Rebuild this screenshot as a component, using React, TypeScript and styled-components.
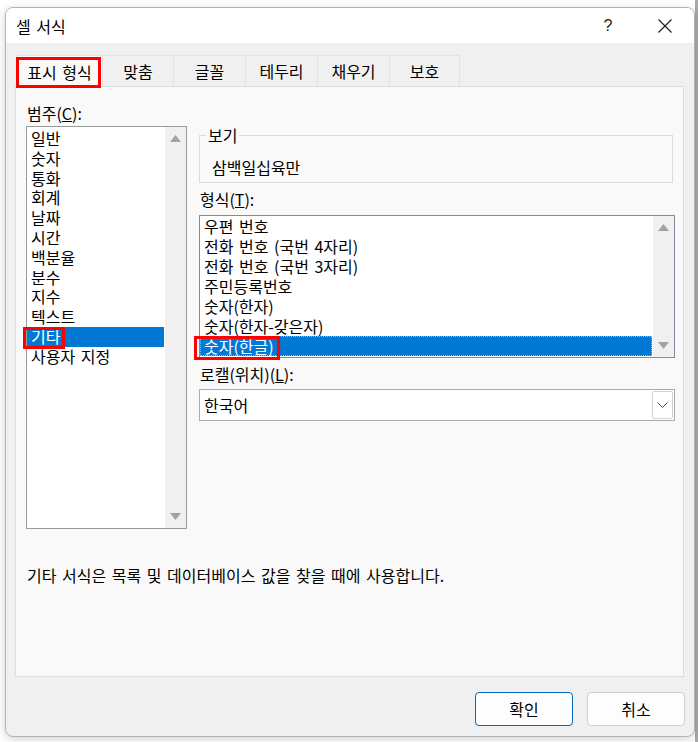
import styled, { createGlobalStyle } from 'styled-components';

const GlobalStyle = createGlobalStyle`
  html, body {
    margin: 0;
    padding: 0;
  }
  body {
    font-family: "Noto Sans CJK KR", "Noto Sans", sans-serif;
    font-size: 16px;
    word-spacing: 2px;
    color: #000;
    background: #fff;
  }
`;

const Page = styled.div`
  width: 698px;
  height: 742px;
  box-sizing: border-box;
  padding: 7px 3px 5px 5px;
  background: linear-gradient(to right, #fff 695px, #a9a9a9 695px);
`;

const Dialog = styled.div`
  width: 690px;
  height: 730px;
  box-sizing: border-box;
  display: flex;
  flex-direction: column;
  border: 1px solid #b4b4b4;
  border-radius: 8px;
  overflow: hidden;
  background: #f0f0f0;
  box-shadow: 0 2px 8px rgba(0, 0, 0, 0.18);
`;

const TitleBar = styled.div`
  height: 35px;
  display: flex;
  align-items: center;
  background: #fff;
`;

const Title = styled.div`
  flex: 1;
  padding-left: 10px;
  line-height: 20px;
`;

const TitleButton = styled.div<{ $width: number }>`
  width: ${(p) => p.$width}px;
  height: 35px;
  display: flex;
  align-items: center;
  justify-content: center;
  font-family: "Liberation Sans", sans-serif;
  font-size: 16px;
  color: #1a1a1a;
`;

const Body = styled.div`
  flex: 1;
  display: flex;
  flex-direction: column;
  padding: 12px 10px 0 9px;
`;

const TabBar = styled.div`
  display: flex;
  height: 31px;
  padding-left: 1px;
`;

const Tab = styled.div<{ $width: number; $active?: boolean; $marked?: boolean }>`
  position: relative;
  width: ${(p) => p.$width}px;
  box-sizing: border-box;
  display: flex;
  align-items: center;
  justify-content: center;
  line-height: 20px;
  background: ${(p) => (p.$active ? '#f9f9f9' : '#f0f0f0')};
  border: 1px solid #e2e2e2;
  border-bottom: none;
  border-left-width: ${(p) => (p.$active ? 1 : 0)}px;
  margin-bottom: ${(p) => (p.$active ? -1 : 0)}px;
  z-index: ${(p) => (p.$active ? 1 : 0)};

  &::after {
    content: '';
    display: ${(p) => (p.$marked ? 'block' : 'none')};
    position: absolute;
    top: 1px;
    left: -1px;
    right: 1px;
    bottom: -1px;
    border: 3px solid #ff0000;
    pointer-events: none;
  }
`;

const Panel = styled.div`
  height: 591px;
  box-sizing: border-box;
  background: #f9f9f9;
  border: 1px solid #dedede;
  padding: 16px 0 0 10px;
`;

const Columns = styled.div`
  display: flex;
  gap: 12px;
`;

const Column = styled.div<{ $top?: number }>`
  display: flex;
  flex-direction: column;
  padding-top: ${(p) => p.$top ?? 0}px;
`;

const Label = styled.div<{ $gap?: number }>`
  line-height: 20px;
  margin: ${(p) => p.$gap ?? 0}px 0 0 1px;
`;

const ListBox = styled.div<{ $width: number; $height: number; $pad: number; $border: string }>`
  width: ${(p) => p.$width}px;
  height: ${(p) => p.$height}px;
  box-sizing: border-box;
  display: flex;
  margin-top: ${(p) => p.$pad}px;
  border: 1px solid ${(p) => p.$border};
  background: #fff;
`;

const ListItems = styled.div<{ $top: number }>`
  flex: 1;
  display: flex;
  flex-direction: column;
  padding-top: ${(p) => p.$top}px;
`;

const ListItem = styled.div<{ $selected?: boolean; $focus?: boolean; $height: number; $indent: number }>`
  height: ${(p) => p.$height}px;
  line-height: ${(p) => p.$height - 2}px;
  box-sizing: border-box;
  padding-left: ${(p) => p.$indent}px;
  white-space: nowrap;
  background: ${(p) => (p.$selected ? '#0078d4' : 'transparent')};
  color: ${(p) => (p.$selected ? '#fff' : '#000')};
  border: 1px dotted ${(p) => (p.$focus ? '#f5a04a' : 'transparent')};
  margin-right: 1px;
`;

const Mark = styled.span<{ $t: number; $r: number; $b: number; $l: number }>`
  position: relative;
  display: inline-block;

  &::after {
    content: '';
    position: absolute;
    top: ${(p) => p.$t}px;
    right: ${(p) => p.$r}px;
    bottom: ${(p) => p.$b}px;
    left: ${(p) => p.$l}px;
    border: 3px solid #ff0000;
    pointer-events: none;
  }
`;

const ScrollBar = styled.div<{ $up: number; $down: number }>`
  width: 21px;
  display: flex;
  flex-direction: column;
  justify-content: space-between;
  align-items: center;
  padding: ${(p) => p.$up}px 0 ${(p) => p.$down}px;
  background: #f0f0f0;
`;

const Preview = styled.fieldset`
  width: 474px;
  margin: 0;
  padding: 0 12px 5px 12px;
  box-sizing: border-box;
  border: 1px solid #dcdcdc;
`;

const Legend = styled.legend`
  padding: 0 2px;
  margin-left: -6px;
  line-height: 20px;
`;

const PreviewText = styled.div`
  margin-top: 12px;
  line-height: 20px;
`;

const Select = styled.div`
  width: 476px;
  height: 32px;
  margin-top: 5px;
  box-sizing: border-box;
  display: flex;
  border: 1px solid #aaaaaa;
  background: #fff;
`;

const SelectValue = styled.div`
  flex: 1;
  padding-left: 4px;
  line-height: 30px;
`;

const SelectButton = styled.div`
  width: 21px;
  margin: 1px;
  box-sizing: border-box;
  display: flex;
  align-items: center;
  justify-content: center;
  border: 1px solid #d2d2d2;
  border-radius: 2px;
`;

const Description = styled.div`
  margin: 36px 0 0 1px;
  line-height: 20px;
`;

const Footer = styled.div`
  display: flex;
  justify-content: flex-end;
  gap: 14px;
  margin: 15px -1px 0 0;
`;

const Button = styled.div<{ $primary?: boolean }>`
  width: 98px;
  height: 34px;
  box-sizing: border-box;
  display: flex;
  align-items: center;
  justify-content: center;
  border: 1px solid ${(p) => (p.$primary ? '#0067c0' : '#d0d0d0')};
  border-radius: 4px;
  background: #fdfdfd;
`;

const ArrowUp = () => (
  <svg width="11" height="7" viewBox="0 0 11 7">
    <polygon points="0,7 5.5,0 11,7" fill="#a3a3a3" />
  </svg>
);

const ArrowDown = () => (
  <svg width="11" height="7" viewBox="0 0 11 7">
    <polygon points="0,0 5.5,7 11,0" fill="#a3a3a3" />
  </svg>
);

const tabs = [
  { name: '표시 형식', width: 87 },
  { name: '맞춤', width: 71 },
  { name: '글꼴', width: 72 },
  { name: '테두리', width: 72 },
  { name: '채우기', width: 72 },
  { name: '보호', width: 70 },
];

const categories = ['일반', '숫자', '통화', '회계', '날짜', '시간', '백분율', '분수', '지수', '텍스트', '기타', '사용자 지정'];

const formats = [
  '우편 번호',
  '전화 번호 (국번 4자리)',
  '전화 번호 (국번 3자리)',
  '주민등록번호',
  '숫자(한자)',
  '숫자(한자-갖은자)',
  '숫자(한글)',
];

export default function App() {
  return (
    <>
      <GlobalStyle />
      <Page>
        <Dialog>
          <TitleBar>
            <Title>셀 서식</Title>
            <TitleButton $width={56}>?</TitleButton>
            <TitleButton $width={58}>
              <svg width="14" height="14" viewBox="0 0 14 14">
                <path d="M0.5 0.5 L13.5 13.5 M13.5 0.5 L0.5 13.5" stroke="#1a1a1a" strokeWidth="1.1" />
              </svg>
            </TitleButton>
          </TitleBar>
          <Body>
            <TabBar>
              {tabs.map((tab, i) => (
                <Tab key={tab.name} $width={tab.width} $active={i === 0} $marked={i === 0}>
                  {tab.name}
                </Tab>
              ))}
            </TabBar>
            <Panel>
              <Columns>
                <Column>
                  <Label>
                    범주(<u>C</u>):
                  </Label>
                  <ListBox $width={161} $height={403} $pad={3} $border="#9a9a9a">
                    <ListItems $top={2}>
                      {categories.map((c) => (
                        <ListItem key={c} $height={19.8} $indent={3} $selected={c === '기타'}>
                          {c === '기타' ? (
                            <Mark $t={-1} $r={-5} $b={-3} $l={-8}>
                              {c}
                            </Mark>
                          ) : (
                            c
                          )}
                        </ListItem>
                      ))}
                    </ListItems>
                    <ScrollBar $up={8} $down={8}>
                      <ArrowUp />
                      <ArrowDown />
                    </ScrollBar>
                  </ListBox>
                </Column>
                <Column $top={22}>
                  <Preview>
                    <Legend>보기</Legend>
                    <PreviewText>삼백일십육만</PreviewText>
                  </Preview>
                  <Label $gap={6}>
                    형식(<u>T</u>):
                  </Label>
                  <ListBox $width={476} $height={143} $pad={6} $border="#868a99">
                    <ListItems $top={0}>
                      {formats.map((f) => (
                        <ListItem key={f} $height={20} $indent={3} $selected={f === '숫자(한글)'} $focus={f === '숫자(한글)'}>
                          {f === '숫자(한글)' ? (
                            <Mark $t={-1} $r={-6} $b={-5} $l={-10}>
                              {f}
                            </Mark>
                          ) : (
                            f
                          )}
                        </ListItem>
                      ))}
                    </ListItems>
                    <ScrollBar $up={8} $down={8}>
                      <ArrowUp />
                      <ArrowDown />
                    </ScrollBar>
                  </ListBox>
                  <Label $gap={6}>
                    로캘(위치)(<u>L</u>):
                  </Label>
                  <Select>
                    <SelectValue>한국어</SelectValue>
                    <SelectButton>
                      <svg width="11" height="6" viewBox="0 0 11 6">
                        <polyline points="0.5,0.5 5.5,5.5 10.5,0.5" fill="none" stroke="#444" strokeWidth="1" />
                      </svg>
                    </SelectButton>
                  </Select>
                </Column>
              </Columns>
              <Description>기타 서식은 목록 및 데이터베이스 값을 찾을 때에 사용합니다.</Description>
            </Panel>
            <Footer>
              <Button $primary>확인</Button>
              <Button>취소</Button>
            </Footer>
          </Body>
        </Dialog>
      </Page>
    </>
  );
}
